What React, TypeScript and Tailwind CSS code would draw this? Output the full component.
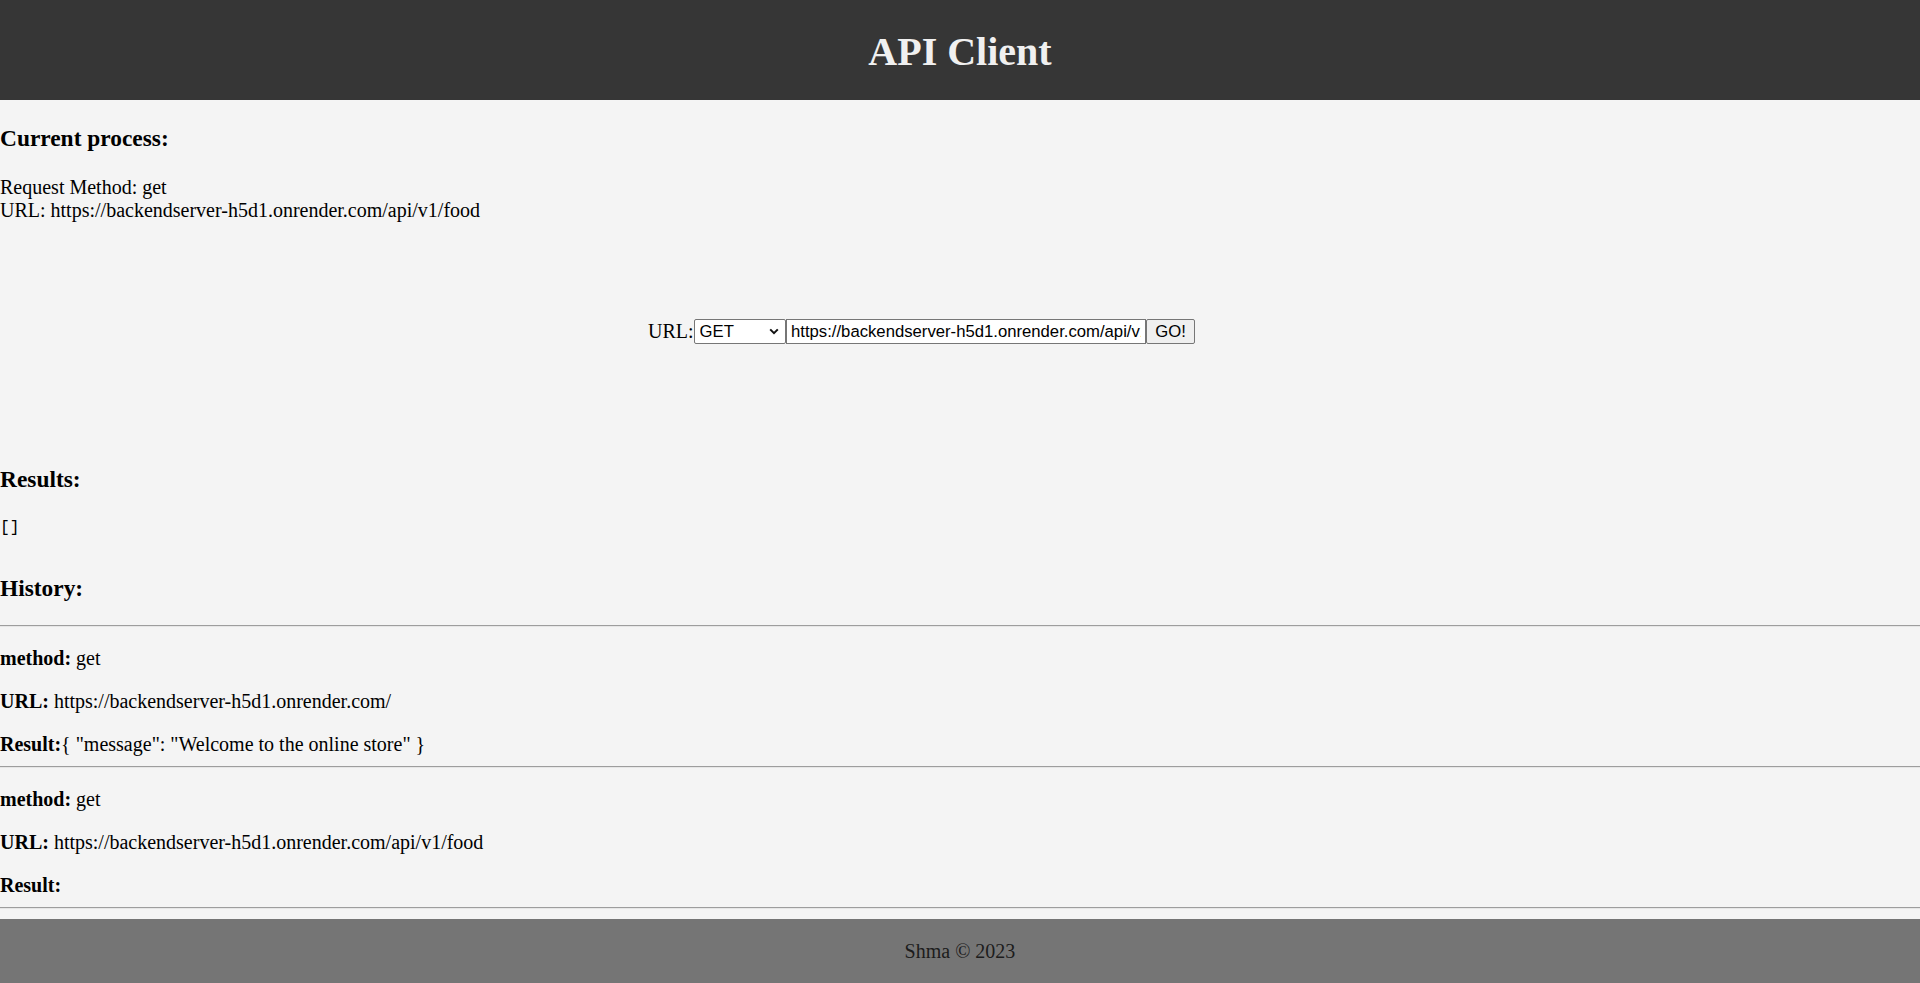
import { useState } from "react";

type HistoryItem = {
  method: string;
  url: string;
  result: string;
};

const history: HistoryItem[] = [
  {
    method: "get",
    url: "https://backendserver-h5d1.onrender.com/",
    result: '{ "message": "Welcome to the online store" }',
  },
  {
    method: "get",
    url: "https://backendserver-h5d1.onrender.com/api/v1/food",
    result: "",
  },
];

function Rule() {
  return <div className="h-[2px] border-t border-b border-t-[#9d9d9d] border-b-[#e6e6e6]" />;
}

export default function App() {
  const [method, setMethod] = useState("GET");
  const [url, setUrl] = useState("https://backendserver-h5d1.onrender.com/api/v1/food");

  return (
    <div className="flex min-h-[983px] flex-col bg-[#f4f4f4] font-['Liberation_Serif','Times_New_Roman',serif] text-[20px] leading-[23px] text-black">
      <header className="flex h-[100px] items-center justify-center bg-[#363636] pt-[3px]">
        <h1 className="text-[40px] font-bold leading-[46px] text-[#f0f0f0]">API Client</h1>
      </header>

      <main className="flex flex-col">
        <h3 className="mt-[25.3px] text-[23.4px] font-bold leading-[27px]">Current process:</h3>
        <div className="mt-[23.5px] leading-[23px]">
          <div>Request Method: {method.toLowerCase()}</div>
          <div>URL: {url}</div>
        </div>

        <form
          className="mt-[97.5px] flex h-[25px] items-center justify-center pr-[77px]"
          onSubmit={(e) => e.preventDefault()}
        >
          <label className="leading-[23px]">URL:</label>
          <div className="relative flex h-[25px] w-[92.5px]">
            <select
              value={method}
              onChange={(e) => setMethod(e.target.value)}
              className="block h-[25px] w-full appearance-none rounded-[2px] border border-[#767676] bg-white pl-[5px] font-['Liberation_Sans',Arial,sans-serif] text-[16.7px] leading-[21px] text-black"
            >
              <option>GET</option>
              <option>POST</option>
              <option>PUT</option>
              <option>DELETE</option>
            </select>
            <svg
              className="pointer-events-none absolute right-[7px] top-[9px] h-[7px] w-[10px]"
              viewBox="0 0 10 7"
              fill="none"
            >
              <path d="M1.2 1.4l3.8 3.8 3.8-3.8" stroke="#111" strokeWidth="2" />
            </svg>
          </div>
          <input
            value={url}
            onChange={(e) => setUrl(e.target.value)}
            className="block h-[25px] w-[360px] border border-[#767676] bg-white px-[4px] font-['Liberation_Sans',Arial,sans-serif] text-[16.7px] text-black"
          />
          <button
            type="submit"
            className="block h-[25px] w-[49px] rounded-[2px] border border-[#767676] bg-[#efefef] font-['Liberation_Sans',Arial,sans-serif] text-[16.7px] leading-[21px] text-black"
          >
            GO!
          </button>
        </form>

        <h3 className="mt-[121.6px] text-[23.4px] font-bold leading-[27px]">Results:</h3>
        <pre className="mt-[25.6px] font-['Liberation_Mono','Courier_New',monospace] text-[16.25px] leading-[19px]">[]</pre>

        <h3 className="mt-[37.8px] text-[23.4px] font-bold leading-[27px]">History:</h3>
        <div className="mt-[22.4px]">
          <Rule />
        </div>
        {history.map((item, i) => (
          <div key={i} className="flex flex-col leading-[23px]">
            <p className="mt-[20px]">
              <b>method:</b> {item.method}
            </p>
            <p className="mt-[20px]">
              <b>URL:</b> {item.url}
            </p>
            <div className="mt-[20px]">
              <b>Result:</b>
              {item.result}
            </div>
            <div className="mt-[10px]">
              <Rule />
            </div>
          </div>
        ))}
      </main>

      <footer className="mt-[10px] flex h-[64px] items-center justify-center bg-[#757575] pt-[2px] leading-[23px] text-[#1c1c1c]">
        Shma © 2023
      </footer>
    </div>
  );
}
